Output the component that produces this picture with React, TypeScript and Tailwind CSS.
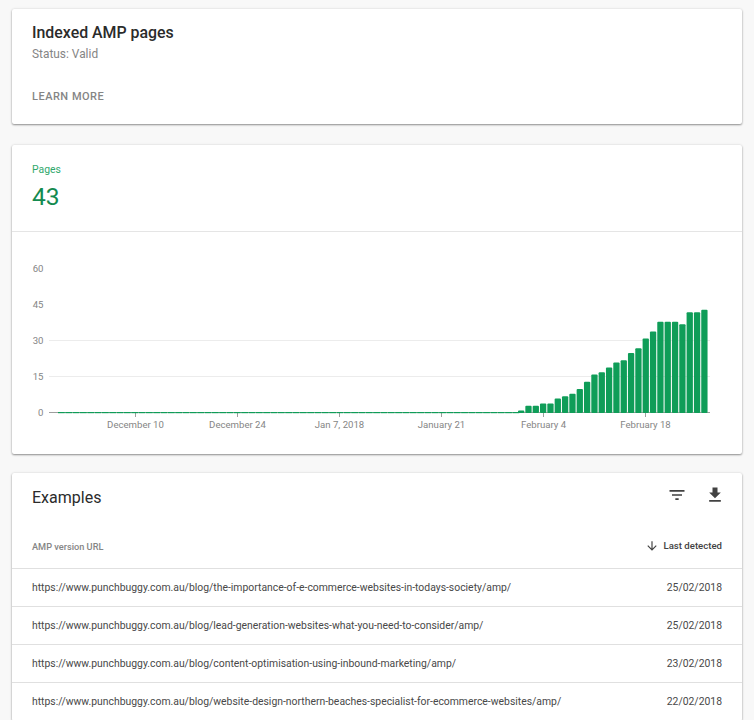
const pageBars = [1, 3, 3, 4, 4, 6, 7, 8, 10, 13, 16, 17, 19, 21, 22, 25, 27, 31, 34, 38, 38, 38, 37, 42, 42, 43];

const yTicks = [60, 45, 30, 15, 0];

const xTicks = [
  { x: 123.5, label: "December 10" },
  { x: 225.5, label: "December 24" },
  { x: 327.5, label: "Jan 7, 2018" },
  { x: 429.5, label: "January 21" },
  { x: 531.5, label: "February 4" },
  { x: 633.5, label: "February 18" },
];

const examples = [
  { url: "https://www.punchbuggy.com.au/blog/the-importance-of-e-commerce-websites-in-todays-society/amp/", date: "25/02/2018" },
  { url: "https://www.punchbuggy.com.au/blog/lead-generation-websites-what-you-need-to-consider/amp/", date: "25/02/2018" },
  { url: "https://www.punchbuggy.com.au/blog/content-optimisation-using-inbound-marketing/amp/", date: "23/02/2018" },
  { url: "https://www.punchbuggy.com.au/blog/website-design-northern-beaches-specialist-for-ecommerce-websites/amp/", date: "22/02/2018" },
];

const cardClass = "rounded-[2px] bg-white shadow-[0_1px_2px_rgba(0,0,0,0.4),0_0_3px_rgba(0,0,0,0.1)]";

function PagesChart() {
  const zeroBars = Array.from({ length: 63 }, (_, i) => 46 + i * 7.33);
  return (
    <svg width="730" height="222" viewBox="0 0 730 222" className="block">
      {yTicks.map((v) => {
        const y = 180.5 - v * 2.4;
        return (
          <g key={v}>
            {(v === 30 || v === 15) && <line x1="37" x2="698" y1={y} y2={y} stroke="#ececec" />}
            <text x="31.5" y={y + 3.5} textAnchor="end" fontSize="9.6" fill="#858585" fontFamily="Roboto">
              {v}
            </text>
          </g>
        );
      })}
      <line x1="37" x2="698" y1="180.5" y2="180.5" stroke="#9e9e9e" />
      {xTicks.map((t) => (
        <g key={t.label}>
          <line x1={t.x} x2={t.x} y1="181" y2="185" stroke="#9e9e9e" />
          <text x={t.x} y="196" textAnchor="middle" fontSize="9.6" fill="#858585" fontFamily="Roboto">
            {t.label}
          </text>
        </g>
      ))}
      {zeroBars.map((x) => (
        <rect key={x} x={x} y="180" width="6.8" height="1.2" fill="#0f9d58" />
      ))}
      {pageBars.map((v, i) => (
        <rect key={i} x={506 + i * 7.33} y={181 - v * 2.4} width="6.3" height={v * 2.4} rx="1" fill="#0f9d58" />
      ))}
    </svg>
  );
}

export default function App() {
  return (
    <div className="h-[720px] overflow-hidden bg-[#f8f8f8] px-3 pt-[9px] font-['Roboto',sans-serif]">
      {/* Summary */}
      <div className={`${cardClass} h-[115px] px-5 pt-[14px]`}>
        <h1 className="text-[15.9px] leading-[20px] font-medium text-[#2b2b2b]">Indexed AMP pages</h1>
        <p className="mt-[3px] text-[11.9px] leading-[16px] text-[#858585]">Status: Valid</p>
        <p className="mt-[27px] text-[11px] leading-[16px] font-medium tracking-[0.5px] text-[#858585]">LEARN MORE</p>
      </div>

      {/* Chart */}
      <div className={`${cardClass} mt-[21px] h-[309px]`}>
        <div className="h-[87px] border-b border-[#e5e5e5] px-5 pt-[18px]">
          <p className="text-[10.4px] leading-[14px] text-[#2fa86c]">Pages</p>
          <p className="mt-[4px] text-[24.6px] leading-[32px] text-[#148a50]">43</p>
        </div>
        <PagesChart />
      </div>

      {/* Examples table */}
      <div className={`${cardClass} mt-[19px]`}>
        <div className="flex h-[52px] items-start justify-between pt-3 pr-[17px] pl-5">
          <h2 className="mt-px text-base leading-[24px] text-[#2b2b2b]">Examples</h2>
          <div className="flex items-center gap-[18.5px] text-[#424242]">
            <svg width="20" height="20" viewBox="0 0 24 24" fill="currentColor">
              <path d="M10 18h4v-2h-4v2zM3 6v2h18V6H3zm3 7h12v-2H6v2z" />
            </svg>
            <svg width="20" height="20" viewBox="0 0 24 24" fill="currentColor">
              <path d="M19 9h-4V3H9v6H5l7 7 7-7zM5 18v2h14v-2H5z" />
            </svg>
          </div>
        </div>
        <div className="flex h-[44px] items-center justify-between border-b border-[#e0e0e0] px-5">
          <span className="text-[9.2px] font-medium text-[#858585]">AMP version URL</span>
          <span className="flex items-center gap-[4.5px] text-[9.6px] font-medium text-[#424242]">
            <svg width="14" height="14" viewBox="0 0 24 24" fill="currentColor">
              <path d="M20 12l-1.41-1.41L13 16.17V4h-2v12.17l-5.58-5.59L4 12l8 8 8-8z" />
            </svg>
            Last detected
          </span>
        </div>
        {examples.map((row) => (
          <div key={row.url} className="flex h-[38px] items-center justify-between border-b border-[#e0e0e0] px-5 text-[10.4px] text-[#484848]">
            <span>{row.url}</span>
            <span>{row.date}</span>
          </div>
        ))}
      </div>
    </div>
  );
}
